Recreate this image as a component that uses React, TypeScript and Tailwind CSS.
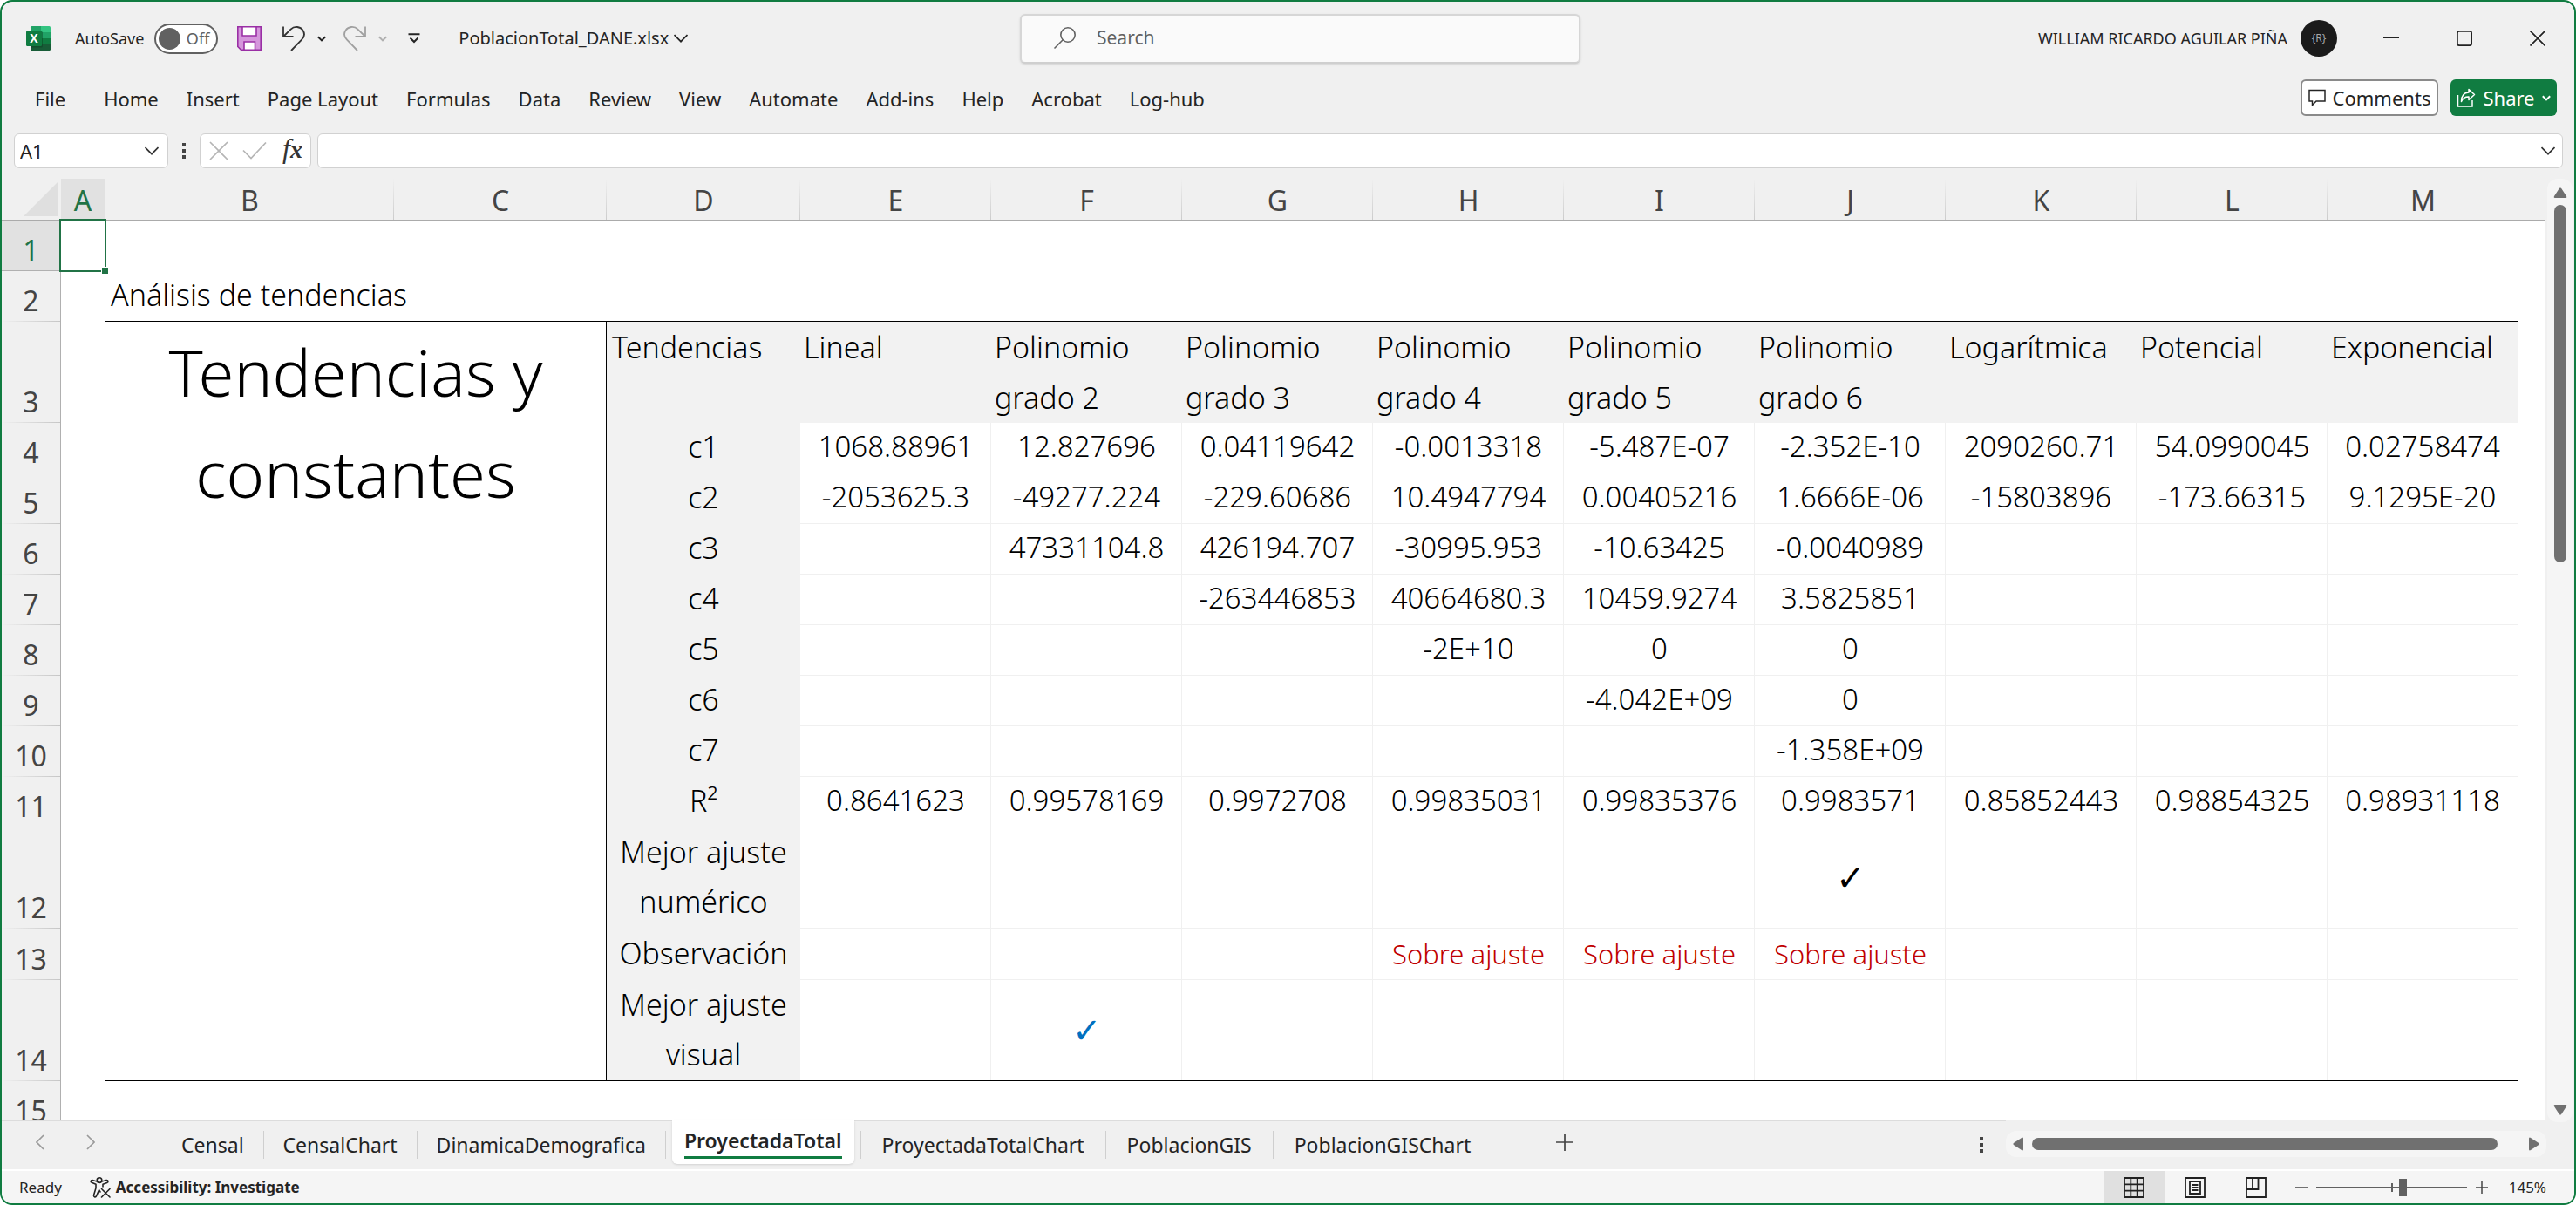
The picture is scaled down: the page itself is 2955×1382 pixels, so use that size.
import React from "react";

type IconProps = { className?: string };

const Chevron = ({ className = "" }: IconProps) => (
  <svg className={className} viewBox="0 0 16 10" fill="none" stroke="currentColor" aria-hidden="true">
    <path d="M0.5 1 L8 8.7 L15.5 1" strokeWidth="1.7" />
  </svg>
);

const SmallChevron = ({ className = "" }: IconProps) => (
  <svg className={className} viewBox="0 0 10 7" fill="none" stroke="currentColor" aria-hidden="true">
    <path d="M0.8 1.2 L5 5.4 L9.2 1.2" strokeWidth="2" />
  </svg>
);

const ExcelLogo = () => (
  <svg className="size-7 shrink-0" viewBox="0 0 28 28" role="img" aria-label="Excel">
    <path d="M6.5 0 H17 V7 H5 V1.5 Q5 0 6.5 0Z" fill="#21a366" />
    <path d="M17 0 H26.5 Q28 0 28 1.5 V7 H17Z" fill="#33c481" />
    <path d="M5 7 H17 V14 H5Z" fill="#107c41" />
    <path d="M17 7 H28 V14 H17Z" fill="#21a366" />
    <path d="M5 14 H17 V21 H5Z" fill="#185c37" />
    <path d="M17 14 H28 V21 H17Z" fill="#107c41" />
    <path d="M5 21 H28 V26.5 Q28 28 26.5 28 H6.5 Q5 28 5 26.5Z" fill="#185c37" />
    <rect x="5" y="6" width="14" height="18.5" rx="1.5" fill="#0b3d22" opacity="0.45" />
    <rect x="0" y="5" width="18" height="18" rx="1.5" fill="#107c41" />
    <text x="9" y="19" textAnchor="middle" fontFamily="Open Sans, sans-serif" fontWeight="700" fontSize="14" fill="#fff">X</text>
  </svg>
);

const SaveIcon = () => (
  <svg className="size-7" viewBox="0 0 28 28" fill="none" stroke="#9a2fa5" strokeWidth="1.6" aria-hidden="true">
    <path d="M0.8 0.8 H27.2 V27.2 H4.5 L0.8 23.5Z" fill="#d596dc" />
    <path d="M6 0.8 H22 V11 H6Z" fill="#fff" />
    <path d="M8 27.2 V18 H20.5 V27.2Z" fill="#fff" />
  </svg>
);

const UndoIcon = ({ className = "" }: IconProps) => (
  <svg className={className} viewBox="0 0 26 29" fill="none" stroke="currentColor" strokeWidth="1.8" aria-hidden="true">
    <path d="M1 0.5 V12 H12.5" />
    <path d="M1.5 11.5 L9.5 3.6 C14 -0.6 20.5 0.6 23.3 4.5 C25.8 8.2 25.2 12.5 22 15.7 L10 28" />
  </svg>
);

const CustomizeIcon = () => (
  <svg className="h-3 w-3.5" viewBox="0 0 14 12" fill="none" stroke="currentColor" strokeWidth="2" aria-hidden="true">
    <path d="M0.5 1.2 H13.5" />
    <path d="M2.5 5.5 L7 10 L11.5 5.5" />
  </svg>
);

const SearchIcon = () => (
  <svg className="size-7" viewBox="0 0 28 28" fill="none" stroke="#616161" strokeWidth="1.6" aria-hidden="true">
    <circle cx="17" cy="10" r="8.2" />
    <path d="M11.2 15.8 L1.5 25.5" />
  </svg>
);

const CommentIcon = () => (
  <svg className="size-5" viewBox="0 0 20 20" fill="none" stroke="currentColor" strokeWidth="1.5" aria-hidden="true">
    <path d="M1 1.5 H19 V14 H9 L4.5 18.5 V14 H1Z" />
  </svg>
);

const ShareIcon = () => (
  <svg className="size-5.5" viewBox="0 0 22 22" fill="none" stroke="currentColor" strokeWidth="1.5" aria-hidden="true">
    <path d="M1.5 8 V21 H18 V14" />
    <path d="M14 1.5 L20.5 7.5 L14 13.5 V10 C9.5 9.8 7 12 5.5 15.5 C5.5 9 8.5 5.2 14 5Z" strokeLinejoin="round" />
  </svg>
);

const AccessibilityIcon = () => (
  <svg className="size-6" viewBox="0 0 24 24" fill="none" stroke="#242424" strokeWidth="1.6" strokeLinecap="round" strokeLinejoin="round" aria-hidden="true">
    <circle cx="11" cy="3.6" r="2.8" />
    <path d="M8.2 5 L3 3.6 C1 3.2 0.4 5.6 2.2 6.3 L7 8.2 V12.5 L4.6 20.5 C4 22.8 6.6 23.8 7.6 21.6 L10.6 14.8 L12 17" />
    <path d="M13.8 5 L19 3.6 C21.4 3.2 21.6 5.8 19.8 6.4 L15 8.2 V11" />
    <path d="M13.5 13.5 L23 23 M23 13.5 L13.5 23" />
  </svg>
);

const Dots = () => (
  <span className="flex flex-col gap-[3px]" aria-hidden="true">
    <span className="size-1 bg-[#444]" />
    <span className="size-1 bg-[#444]" />
    <span className="size-1 bg-[#444]" />
  </span>
);

const menu = ["Home", "Insert", "Page Layout", "Formulas", "Data", "Review", "View", "Automate", "Add-ins", "Help", "Acrobat", "Log-hub"];

const columns = ["B", "C", "D", "E", "F", "G", "H", "I", "J", "K", "L", "M"];
const columnWidths = ["w-[331px]", "w-[244px]", "w-[222px]", ...Array(9).fill("w-[219px]")];

const headings = ["Lineal", "Polinomio grado 2", "Polinomio grado 3", "Polinomio grado 4", "Polinomio grado 5", "Polinomio grado 6", "Logarítmica", "Potencial", "Exponencial"];

type Row = { n: number; label: string; cells: string[]; tall?: boolean };

const rows: Row[] = [
  { n: 4, label: "c1", cells: ["1068.88961", "12.827696", "0.04119642", "-0.0013318", "-5.487E-07", "-2.352E-10", "2090260.71", "54.0990045", "0.02758474"] },
  { n: 5, label: "c2", cells: ["-2053625.3", "-49277.224", "-229.60686", "10.4947794", "0.00405216", "1.6666E-06", "-15803896", "-173.66315", "9.1295E-20"] },
  { n: 6, label: "c3", cells: ["", "47331104.8", "426194.707", "-30995.953", "-10.63425", "-0.0040989", "", "", ""] },
  { n: 7, label: "c4", cells: ["", "", "-263446853", "40664680.3", "10459.9274", "3.5825851", "", "", ""] },
  { n: 8, label: "c5", cells: ["", "", "", "-2E+10", "0", "0", "", "", ""] },
  { n: 9, label: "c6", cells: ["", "", "", "", "-4.042E+09", "0", "", "", ""] },
  { n: 10, label: "c7", cells: ["", "", "", "", "", "-1.358E+09", "", "", ""] },
  { n: 11, label: "R²", cells: ["0.8641623", "0.99578169", "0.9972708", "0.99835031", "0.99835376", "0.9983571", "0.85852443", "0.98854325", "0.98931118"] },
  { n: 12, label: "Mejor ajuste numérico", tall: true, cells: ["", "", "", "", "", "✓", "", "", ""] },
  { n: 13, label: "Observación", cells: ["", "", "", "Sobre ajuste", "Sobre ajuste", "Sobre ajuste", "", "", ""] },
  { n: 14, label: "Mejor ajuste visual", tall: true, cells: ["", "✓", "", "", "", "", "", "", ""] },
];

function RowNumber({ n }: { n: number }) {
  const active = n === 1;
  return (
    <th
      scope="row"
      className={
        "border-r border-[#b0b0b0] bg-[length:100%_1px] bg-bottom bg-no-repeat p-0 align-bottom text-[32px] leading-[48px] font-normal " +
        (active
          ? "bg-[#e1e1e1] bg-[linear-gradient(#b0b0b0,#b0b0b0)] text-[#217346]"
          : "bg-[#f0f0f0] bg-[linear-gradient(to_right,#f0f0f0,#c6c6c6)] text-[#444]")
      }
    >
      {n}
    </th>
  );
}

function CellContent({ value, row }: { value: string; row: number }) {
  if (value === "✓") {
    return <span className={"font-['DejaVu_Sans',sans-serif] text-[40px] leading-10 " + (row === 14 ? "text-[#0070c0]" : "text-black")}>✓</span>;
  }
  if (row === 13) return <span className="text-[31px] text-[#c00000]">{value}</span>;
  return <>{value}</>;
}

function Sheet() {
  return (
    <table className="w-full table-fixed border-separate border-spacing-0 text-black">
      <colgroup>
        <col className="w-[68px]" />
        <col className="w-[51px]" />
        {columnWidths.map((w, i) => (
          <col key={i} className={w} />
        ))}
        <col />
      </colgroup>
      <thead>
        <tr className="h-12 text-[32px] leading-[44px] text-[#444]">
          <td className="border-b border-[#ababab] bg-[#f0f0f0] p-0 align-bottom">
            <svg className="mr-1 mb-1 ml-auto size-[39px]" viewBox="0 0 39 39" aria-hidden="true">
              <path d="M39 0 V39 H0Z" fill="#dfdfdf" />
            </svg>
          </td>
          <th scope="col" className="border-r border-b border-[#b0b0b0] bg-[#e1e1e1] p-0 align-bottom font-normal text-[#217346]">A</th>
          {columns.map((c) => (
            <th
              key={c}
              scope="col"
              className="border-b border-[#ababab] bg-[#f0f0f0] bg-[linear-gradient(to_bottom,#f0f0f0,#cccccc)] bg-[length:1px_100%] bg-right bg-no-repeat p-0 align-bottom font-normal"
            >
              {c}
            </th>
          ))}
          <td className="border-b border-[#ababab] bg-[#f0f0f0]" />
        </tr>
      </thead>
      <tbody className="text-[34px] leading-[54px] font-light">
        <tr className="h-[58px]">
          <RowNumber n={1} />
          <td className="relative">
            <span className="absolute -top-0.5 -right-px -bottom-px -left-0.5 border-2 border-[#217346]">
              <span className="absolute -right-1 -bottom-1 size-2 border-t border-l border-white bg-[#217346]" />
            </span>
          </td>
          <td colSpan={13} />
        </tr>
        <tr className="h-[58px]">
          <RowNumber n={2} />
          <td />
          <td colSpan={12} className="border-b border-black py-0 pr-0 pl-1.5 align-top">Análisis de tendencias</td>
          <td />
        </tr>
        <tr className="h-[116px]">
          <RowNumber n={3} />
          <td className="border-r border-black" />
          <td colSpan={2} rowSpan={12} className="border-r border-b border-black px-10 py-0 text-center align-top text-[74px] leading-[116px]">
            Tendencias y constantes
          </td>
          <th scope="col" className="bg-[#f2f2f2] py-0 pr-0 pl-1.5 text-left align-top leading-[58px] font-light">Tendencias</th>
          {headings.map((h, i) => (
            <th
              key={h}
              scope="col"
              className={"bg-[#f2f2f2] py-0 pr-0 pl-1 text-left align-top leading-[58px] font-light" + (i === 8 ? " border-r border-black" : "")}
            >
              {h}
            </th>
          ))}
          <td />
        </tr>
        {rows.map((row) => {
          const ruled = row.n === 11 || row.n === 14;
          return (
            <tr key={row.n} className={row.tall ? "h-[116px]" : "h-[58px]"}>
              <RowNumber n={row.n} />
              <td className="border-r border-black" />
              <th
                scope="row"
                className={
                  "bg-[#f2f2f2] px-2 py-0 text-center align-top font-light " +
                  (row.n > 11 ? "leading-[57px] " : "") +
                  (ruled ? "border-b border-black" : "")
                }
              >
                {row.label}
              </th>
              {row.cells.map((value, i) => (
                <td
                  key={i}
                  className={
                    "border-b px-0 pb-0 text-center text-[33px] " +
                    (row.tall ? "pt-1 align-middle " : "pt-0 align-top ") +
                    (row.n > 11 ? "leading-[57px] " : "") +
                    (ruled ? "border-b-black " : "border-b-[#f0f0f0] ") +
                    (i === 8
                      ? "border-r border-r-black"
                      : "bg-[linear-gradient(#f0f0f0,#f0f0f0)] bg-[length:1px_100%] bg-right bg-no-repeat")
                  }
                >
                  <CellContent value={value} row={row.n} />
                </td>
              ))}
              <td />
            </tr>
          );
        })}
        <tr className="h-[58px]">
          <RowNumber n={15} />
          <td colSpan={14} />
        </tr>
      </tbody>
    </table>
  );
}

function TitleBar() {
  return (
    <div className="grid h-[84px] grid-cols-[1fr_643px_1fr] items-center pl-7">
      <div className="flex items-center">
        <ExcelLogo />
        <label className="ml-7 flex items-center gap-3 text-lg">
          AutoSave
          <span className="relative flex h-[35px] w-[73px] items-center justify-end rounded-full border-2 border-[#616161] bg-white pr-2 text-lg text-[#616161]">
            <input type="checkbox" aria-label="AutoSave" className="absolute left-[3px] size-[25px] appearance-none rounded-full bg-[#616161]" />
            Off
          </span>
        </label>
        <button aria-label="Save" className="ml-[22px]"><SaveIcon /></button>
        <button aria-label="Undo" className="ml-6"><UndoIcon className="h-[29px] w-[26px] text-[#333]" /></button>
        <button aria-label="Undo options" className="ml-3.5"><SmallChevron className="h-[7px] w-2.5 text-[#222]" /></button>
        <button aria-label="Redo" className="ml-5"><UndoIcon className="h-[29px] w-[26px] -scale-x-100 text-[#a0a0a0]" /></button>
        <button aria-label="Redo options" className="ml-3.5"><SmallChevron className="h-[7px] w-2.5 text-[#b0b0b0]" /></button>
        <button aria-label="Customize toolbar" className="ml-6"><CustomizeIcon /></button>
        <button className="ml-11 flex items-center gap-1.5 text-xl text-[#242424]">
          PoblacionTotal_DANE.xlsx
          <Chevron className="h-2.5 w-4" />
        </button>
      </div>
      <label className="flex h-[57px] items-center gap-5.5 rounded-md border-2 border-[#d6d6d6] border-b-[#cfcfcf] bg-[#fafafa] pl-9 shadow-sm">
        <SearchIcon />
        <input type="search" aria-label="Search" placeholder="Search" className="min-w-0 flex-1 bg-transparent text-[21px] outline-none placeholder:text-[#616161]" />
      </label>
      <div className="flex items-center justify-end">
        <span className="text-lg text-[#242424]">WILLIAM RICARDO AGUILAR PIÑA</span>
        <span className="mr-5 ml-[15px] flex size-[42px] items-center justify-center rounded-full bg-[#1b1b1b] text-xs text-[#a8a8a8]">{"{R}"}</span>
        <button aria-label="Minimize" className="flex h-12 w-21 items-center justify-center">
          <svg className="size-[18px]" viewBox="0 0 18 18" fill="none" stroke="#222" strokeWidth="2"><path d="M0 8 H18" /></svg>
        </button>
        <button aria-label="Maximize" className="flex h-12 w-21 items-center justify-center">
          <svg className="size-[18px]" viewBox="0 0 18 18" fill="none" stroke="#222" strokeWidth="1.8"><rect x="0.9" y="0.9" width="16.2" height="16.2" rx="2" /></svg>
        </button>
        <button aria-label="Close" className="flex h-12 w-21 items-center justify-center">
          <svg className="size-[18px]" viewBox="0 0 18 18" fill="none" stroke="#222" strokeWidth="1.7"><path d="M0.5 0.5 L17.5 17.5 M17.5 0.5 L0.5 17.5" /></svg>
        </button>
      </div>
    </div>
  );
}

function RibbonTabs() {
  return (
    <div className="mt-[5px] flex h-[42px] items-center pr-5 pl-[38px] text-[22px] text-[#242424]">
      <nav className="flex gap-8 pt-0.5">
        <button className="mr-3">File</button>
        {menu.map((m) => (
          <button key={m}>{m}</button>
        ))}
      </nav>
      <button className="ml-auto flex h-full w-[158px] items-center justify-center gap-2 rounded-md border-2 border-[#8a8a8a] bg-white">
        <CommentIcon />
        Comments
      </button>
      <button className="ml-3.5 flex h-full w-[122px] items-center justify-center gap-2 rounded-md bg-[#107c41] text-white">
        <ShareIcon />
        Share
        <SmallChevron className="h-[7px] w-2.5" />
      </button>
    </div>
  );
}

function FormulaBar() {
  return (
    <div className="mt-5 mb-3 flex h-10 items-center pr-[13px] pl-3.5">
      <div className="flex h-full w-[177px] items-center rounded-md border border-[#d1d1d1] bg-white pr-2.5 pl-1.5">
        <input aria-label="Name box" defaultValue="A1" className="min-w-0 flex-1 bg-transparent text-[22px] text-[#222] outline-none" />
        <button aria-label="Name box options"><Chevron className="h-2.5 w-4 text-[#333]" /></button>
      </div>
      <span className="mx-4"><Dots /></span>
      <div className="flex h-full w-32 items-center rounded-md border border-[#d1d1d1] bg-white pl-2.5">
        <button aria-label="Cancel">
          <svg className="size-[22px]" viewBox="0 0 22 22" fill="none" stroke="#b5b5b5" strokeWidth="1.7"><path d="M1 1 L21 21 M21 1 L1 21" /></svg>
        </button>
        <button aria-label="Enter" className="ml-4">
          <svg className="h-[22px] w-7" viewBox="0 0 28 22" fill="none" stroke="#b5b5b5" strokeWidth="1.7"><path d="M1 10.5 L10 19.5 L27 1.5" /></svg>
        </button>
        <button aria-label="Insert function" className="ml-4.5 pb-1 font-['Liberation_Serif',serif] text-[32px] leading-8 font-bold text-[#333] italic">
          <span className="font-normal">f</span>
          <span className="text-[28px]">x</span>
        </button>
      </div>
      <div className="ml-[7px] flex h-full flex-1 items-center rounded-md border border-[#d1d1d1] bg-white pr-2">
        <input aria-label="Formula bar" className="min-w-0 flex-1 bg-transparent px-2 text-[22px] outline-none" />
        <button aria-label="Expand formula bar"><Chevron className="h-2.5 w-4 text-[#333]" /></button>
      </div>
    </div>
  );
}

function SheetTabs() {
  return (
    <div className="flex h-14 shrink-0 text-[23px] text-[#242424]">
      <div className="flex flex-1 border-t border-[#dcdcdc]">
        <div className="flex items-center gap-12 pr-[77px] pb-2 pl-[39px] text-[#9a9a9a]">
          <button aria-label="Previous sheets">
            <svg className="h-[18px] w-2.5" viewBox="0 0 10 18" fill="none" stroke="currentColor" strokeWidth="1.7"><path d="M9 1 L1 9 L9 17" /></svg>
          </button>
          <button aria-label="Next sheets">
            <svg className="h-[18px] w-2.5" viewBox="0 0 10 18" fill="none" stroke="currentColor" strokeWidth="1.7"><path d="M1 1 L9 9 L1 17" /></svg>
          </button>
        </div>
        <div className="flex pt-[11px]">
          <button className="flex h-8 items-center border-r border-[#cfcfcf] px-5.5">Censal</button>
          <button className="flex h-8 items-center border-r border-[#cfcfcf] px-5.5">CensalChart</button>
          <button className="flex h-8 items-center border-r border-[#cfcfcf] px-5.5">DinamicaDemografica</button>
        </div>
        <button className="mx-[7px] -mt-px h-[50px] rounded-b-md bg-white px-3.5 pb-1 font-semibold shadow-sm">
          <span className="block border-b-[3px] border-[#107c41] pt-0.5 leading-9">ProyectadaTotal</span>
        </button>
        <div className="flex pt-[11px]">
          <button className="flex h-8 items-center border-x border-[#cfcfcf] px-6">ProyectadaTotalChart</button>
          <button className="flex h-8 items-center border-r border-[#cfcfcf] px-6">PoblacionGIS</button>
          <button className="flex h-8 items-center border-r border-[#cfcfcf] px-6">PoblacionGISChart</button>
        </div>
        <button aria-label="New sheet" className="ml-[73px] pb-2">
          <svg className="size-5" viewBox="0 0 20 20" fill="none" stroke="#444" strokeWidth="1.7"><path d="M10 0 V20 M0 10 H20" /></svg>
        </button>
        <span className="mt-[18px] mr-[26px] ml-auto"><Dots /></span>
      </div>
      <div className="mt-3 mr-8 flex h-[30px] w-[620px] items-center rounded-xl bg-[#f5f5f5] px-2 text-[#707070]">
        <button aria-label="Scroll left">
          <svg className="h-4 w-3" viewBox="0 0 12 16" fill="currentColor"><path d="M12 1.5 V14.5 Q11.5 16 10 15 L0.8 9 Q0 8 0.8 7 L10 1 Q11.5 0 12 1.5Z" /></svg>
        </button>
        <span className="mr-9 ml-2.5 h-3.5 flex-1 rounded-full bg-[#707070]" />
        <button aria-label="Scroll right">
          <svg className="h-4 w-3" viewBox="0 0 12 16" fill="currentColor"><path d="M0 1.5 V14.5 Q0.5 16 2 15 L11.2 9 Q12 8 11.2 7 L2 1 Q0.5 0 0 1.5Z" /></svg>
        </button>
      </div>
    </div>
  );
}

function StatusBar() {
  const view = "flex h-full w-[70px] items-center justify-center";
  return (
    <footer className="flex h-[39px] shrink-0 items-center border-t-2 border-white bg-[#f5f5f5] pr-8 pl-5 text-[17px] text-[#242424]">
      <span>Ready</span>
      <button className="ml-8 flex items-center gap-1.5 font-bold">
        <AccessibilityIcon />
        Accessibility: Investigate
      </button>
      <div className="ml-auto flex h-full">
        <button aria-label="Normal view" className={view + " bg-[#e0e0e0]"}>
          <svg className="size-6" viewBox="0 0 24 24" fill="none" stroke="#222" strokeWidth="1.8">
            <path d="M1 1 H23 V23 H1Z M8.3 1 V23 M15.7 1 V23 M1 8.3 H23 M1 15.7 H23" />
          </svg>
        </button>
        <button aria-label="Page layout view" className={view}>
          <svg className="size-6" viewBox="0 0 24 24" fill="none" stroke="#222" strokeWidth="1.8">
            <path d="M1 1 H23 V23 H1Z M6 5 H18 V19 H6Z M8.5 9 H15.5 M8.5 12 H15.5 M8.5 15 H15.5" />
          </svg>
        </button>
        <button aria-label="Page break preview" className={view}>
          <svg className="size-6" viewBox="0 0 24 24" fill="none" stroke="#222" strokeWidth="1.8">
            <path d="M1 1 H23 V23 H1Z M1 14 H14.5 V1 M8 1 V14" />
          </svg>
        </button>
      </div>
      <button aria-label="Zoom out" className="ml-2.5">
        <svg className="size-3.5" viewBox="0 0 14 14" fill="none" stroke="#444" strokeWidth="1.5"><path d="M0 7 H14" /></svg>
      </button>
      <span className="relative mx-2.5 flex items-center">
        <span className="absolute left-[86px] h-2.5 w-0.5 bg-[#616161]" />
        <input
          type="range"
          aria-label="Zoom"
          min={0}
          max={100}
          defaultValue={58}
          className="relative h-5 w-[173px] appearance-none bg-transparent [&::-webkit-slider-runnable-track]:h-0.5 [&::-webkit-slider-runnable-track]:bg-[#616161] [&::-webkit-slider-thumb]:-mt-[9px] [&::-webkit-slider-thumb]:h-5 [&::-webkit-slider-thumb]:w-[9px] [&::-webkit-slider-thumb]:appearance-none [&::-webkit-slider-thumb]:bg-[#616161]"
        />
      </span>
      <button aria-label="Zoom in">
        <svg className="size-3.5" viewBox="0 0 14 14" fill="none" stroke="#444" strokeWidth="1.5"><path d="M0 7 H14 M7 0 V14" /></svg>
      </button>
      <span className="ml-6">145%</span>
    </footer>
  );
}

export default function App() {
  return (
    <div className="flex h-screen flex-col overflow-hidden rounded-[14px] border-2 border-[#107c41] bg-[#f0f0f0] font-['Noto_Sans',sans-serif] text-[#242424]">
      <header className="shrink-0">
        <TitleBar />
        <RibbonTabs />
        <FormulaBar />
      </header>
      <main className="flex min-h-0 flex-1">
        <div className="min-w-0 flex-1 overflow-hidden bg-white">
          <Sheet />
        </div>
        <div className="mr-0.5 -mb-0.5 ml-[3px] flex w-[29px] flex-col items-center rounded-xl bg-[#f5f5f5] pt-2.5 pb-2 text-[#707070]">
          <button aria-label="Scroll up">
            <svg className="h-3 w-4" viewBox="0 0 16 12" fill="currentColor"><path d="M1.5 12 H14.5 Q16 11.5 15 10 L9 0.8 Q8 0 7 0.8 L1 10 Q0 11.5 1.5 12Z" /></svg>
          </button>
          <span className="mt-2 h-[410px] w-3.5 rounded-full bg-[#707070]" />
          <button aria-label="Scroll down" className="mt-auto">
            <svg className="h-3 w-4" viewBox="0 0 16 12" fill="currentColor"><path d="M1.5 0 H14.5 Q16 0.5 15 2 L9 11.2 Q8 12 7 11.2 L1 2 Q0 0.5 1.5 0Z" /></svg>
          </button>
        </div>
      </main>
      <SheetTabs />
      <StatusBar />
    </div>
  );
}
